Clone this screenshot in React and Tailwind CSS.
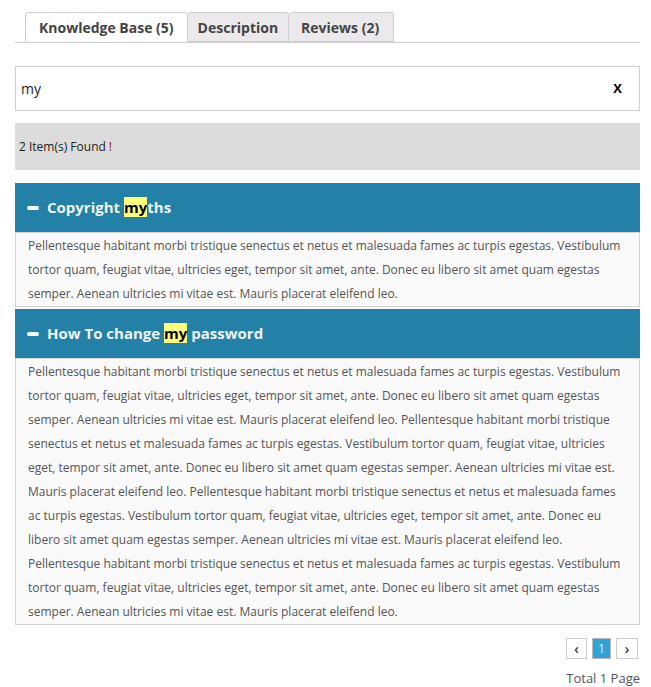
import { useState } from 'react'

const para =
  'Pellentesque habitant morbi tristique senectus et netus et malesuada fames ac turpis egestas. Vestibulum tortor quam, feugiat vitae, ultricies eget, tempor sit amet, ante. Donec eu libero sit amet quam egestas semper. Aenean ultricies mi vitae est. Mauris placerat eleifend leo.'

const items = [
  { id: 1, before: 'Copyright ', match: 'my', after: 'ths', body: para },
  { id: 2, before: 'How To change ', match: 'my', after: ' password', body: [para, para, para, para].join(' ') },
]

const tabs = [
  { label: 'Knowledge Base (5)', active: true, pad: 'px-[13px]' },
  { label: 'Description', pad: 'px-[10px]' },
  { label: 'Reviews (2)', pad: 'pl-[12px] pr-[14px]' },
]

export default function App() {
  const [query, setQuery] = useState('my')

  return (
    <div className="w-[651px] pl-[15px] pr-[11px] pt-[12px] pb-[2px] font-['Open_Sans',sans-serif] text-[#555]">
      <div className="flex border-b border-[#cfcfcf] pl-[10px]">
        {tabs.map((t) => (
          <div
            key={t.label}
            className={
              t.active
                ? `h-[30px] ${t.pad} flex items-center border border-[#cfcfcf] border-b-white -mb-px bg-white rounded-t-[4px]`
                : `h-[30px] ${t.pad} flex items-center border border-[#cfcfcf] border-l-0 bg-[#ebe9eb] rounded-t-[3px]`
            }
          >
            <span className="text-[14px] font-bold text-[#444]">{t.label}</span>
          </div>
        ))}
      </div>

      <div className="mt-[23px] h-[45px] border border-[#cfcfcf] flex items-center pl-[5px] pr-[17px]">
        <input
          value={query}
          onChange={(e) => setQuery(e.target.value)}
          className="flex-1 outline-none text-[14px] text-[#222] bg-transparent"
        />
        <button type="button" className="text-[13px] font-bold text-black" onClick={() => setQuery('')}>
          X
        </button>
      </div>

      <div className="mt-[12px] h-[47px] bg-[#dcdcdc] flex items-center px-[4px] text-[12px] text-[#222]">
        2 Item(s) Found <span className="ml-[3px] text-[#7a1010]">!</span>
      </div>

      <div className="mt-[13px] flex flex-col gap-[2px]">
        {items.map((it) => (
          <div key={it.id}>
            <div className="h-[49px] bg-[#2380a6] flex items-center pl-[12px] text-[15px] font-bold text-[#eef4f7]">
              <span className="w-[12px] h-[4px] rounded-[2px] bg-white mr-[8px]" />
              <span>
                {it.before}
                <span className="bg-[#ffff7a] text-black">{it.match}</span>
                {it.after}
              </span>
            </div>
            <div className="border border-[#d4d4d4] bg-[#fafafa] px-[12px] pt-[1px] text-[12px] leading-[24px] text-[#555]">
              {it.body}
            </div>
          </div>
        ))}
      </div>

      <div className="mt-[13px] flex justify-end gap-[5px] pr-[2px]">
        <button type="button" className="w-[21px] h-[21px] border border-[#ccc] bg-white flex items-center justify-center text-[15px] leading-none text-black">‹</button>
        <button type="button" className="w-[19px] h-[21px] border border-[#bbb] bg-[#2fa3d3] flex items-center justify-center text-[12px] text-[#dff1fa]">1</button>
        <button type="button" className="w-[22px] h-[21px] border border-[#ccc] bg-white flex items-center justify-center text-[15px] leading-none text-black">›</button>
      </div>
      <div className="mt-[10px] text-right text-[13px] text-[#555]">Total 1 Page</div>
    </div>
  )
}
